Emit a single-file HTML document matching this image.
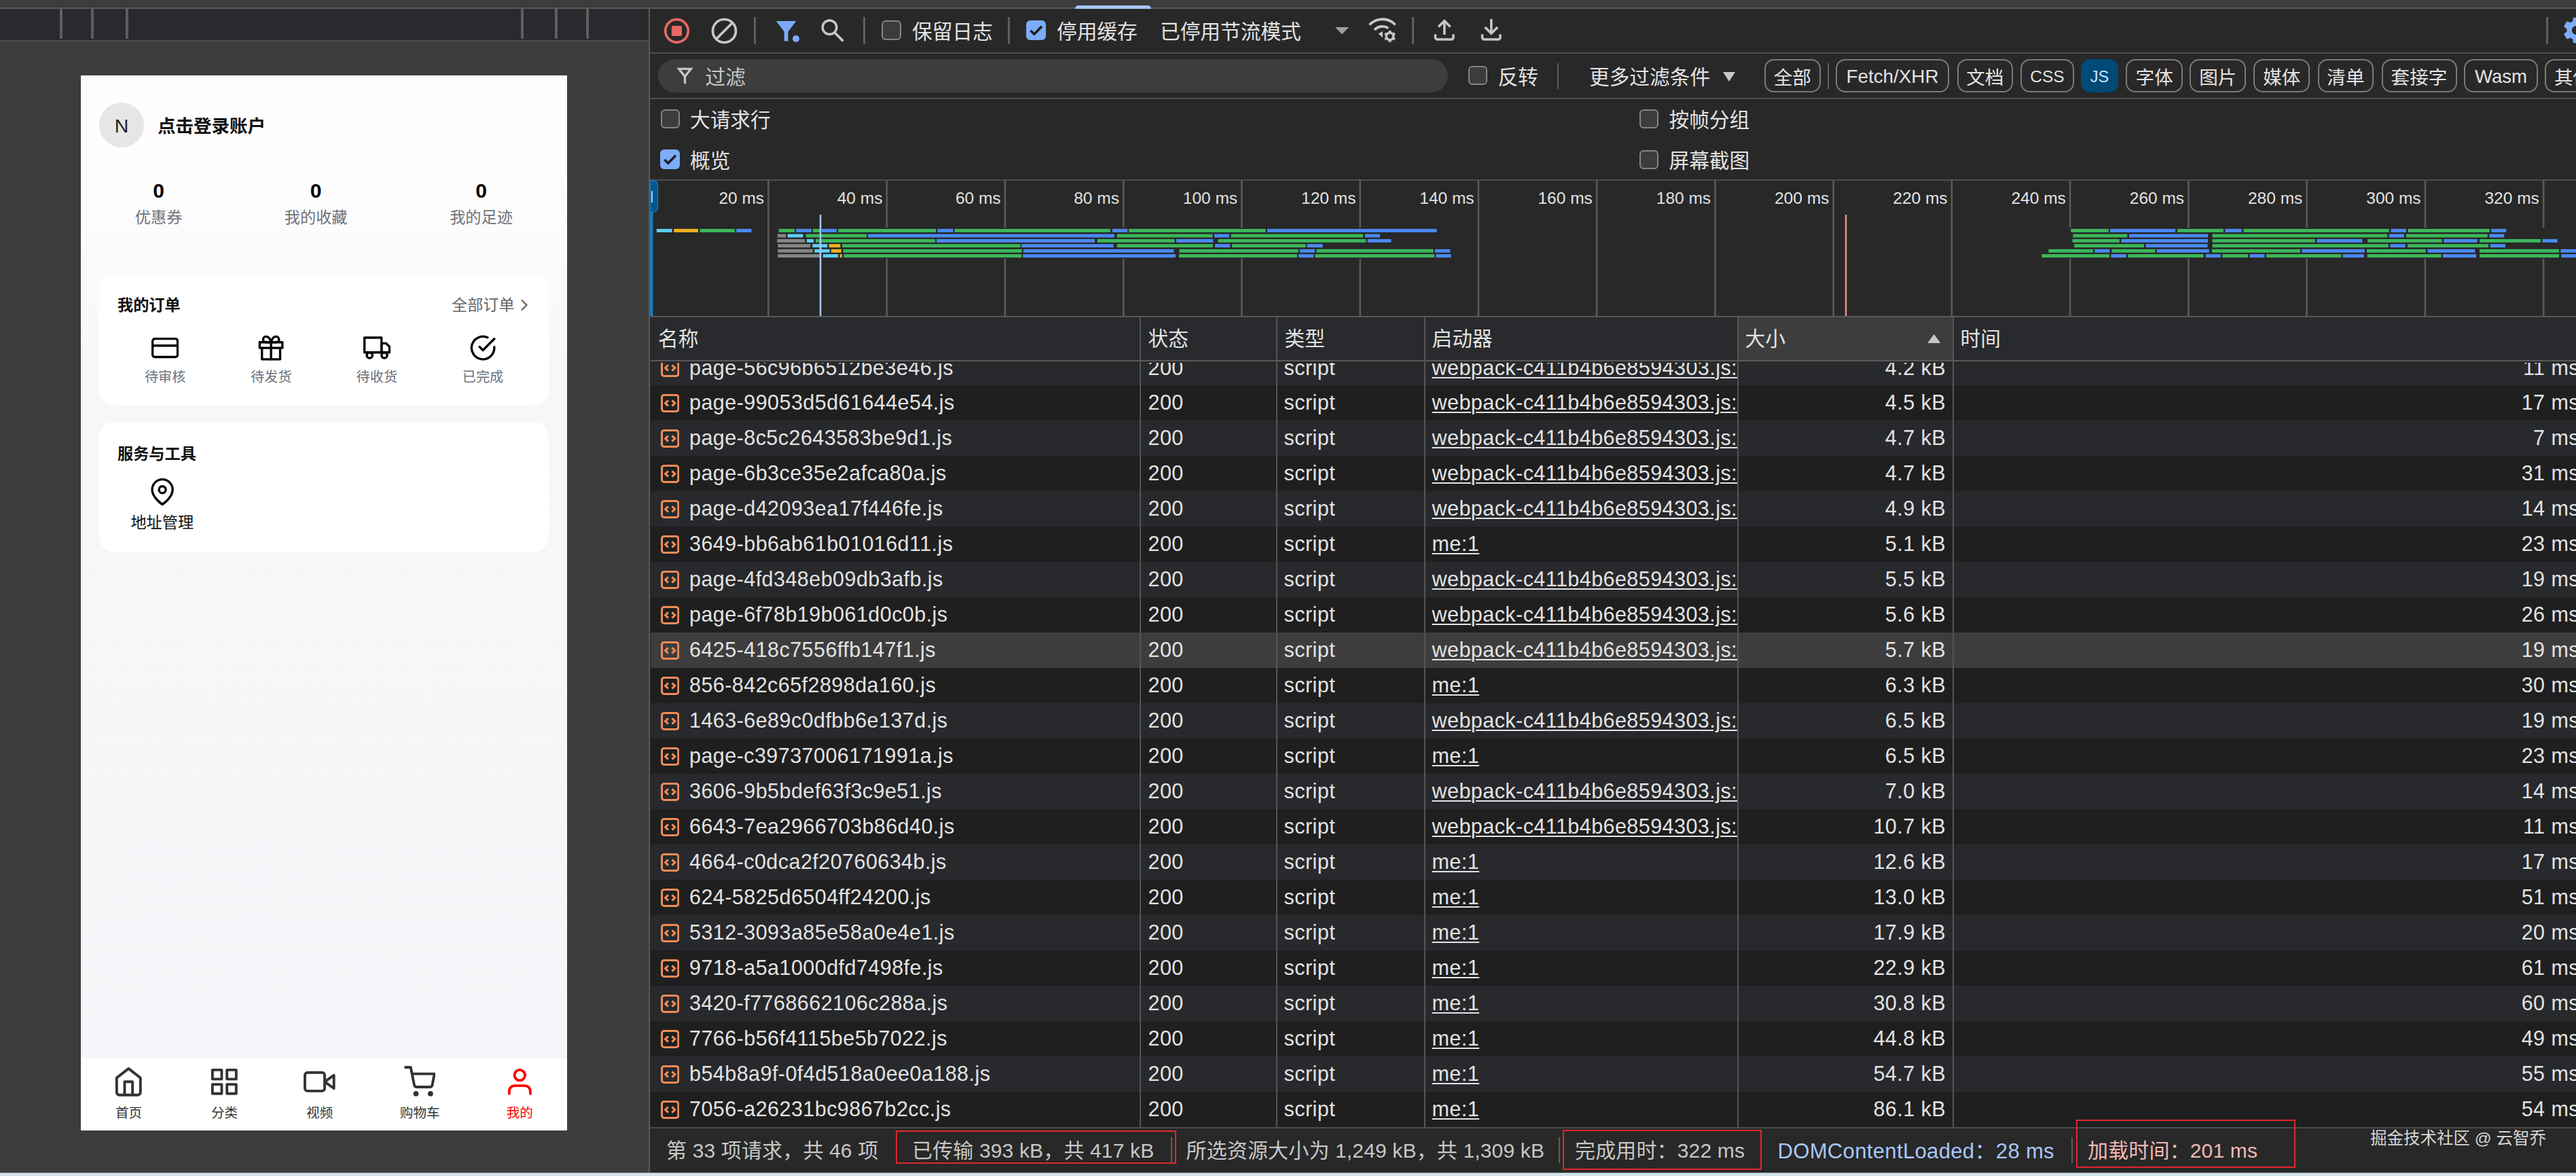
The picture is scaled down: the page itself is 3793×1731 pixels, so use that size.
<!DOCTYPE html><html lang="zh-CN"><head><meta charset="utf-8"><title>Network</title><style>
*{box-sizing:border-box;margin:0;padding:0}
html,body{width:3793px;height:1731px;overflow:hidden;background:#3c3c3c}
body{position:relative;font-family:"Liberation Sans","Noto Sans CJK SC",sans-serif;color:#e3e3e3}
.a{position:absolute}
.t{position:absolute;white-space:nowrap;line-height:1}
.dt{font-size:29.7px;color:#e3e3e3;margin-top:1.5px}
.la{font-size:30.5px;letter-spacing:.45px}
.ph{font-family:"Liberation Sans","Noto Sans CJK SC",sans-serif}
.vd{position:absolute;width:2.6px;background:#5e5e5e}
.cb{position:absolute;width:29px;height:29px;border:2.5px solid #858585;border-radius:6px;background:#3c3c3c}
.cbc{position:absolute;width:29px;height:29px;border-radius:6px;background:#7cacf8}
.pill{position:absolute;top:87px;height:49px;border:2px solid #7a7a7a;border-radius:14px;font-size:27.6px;line-height:51.5px;text-align:center;color:#e3e3e3;white-space:nowrap}
.row{position:absolute;left:958px;width:2840px;height:52px}
.row .t{top:10px}
.ic{position:absolute;left:14.800px;top:12.400px;width:27.400px;height:27px}
u{text-decoration-thickness:2px;text-underline-offset:3px}
</style></head><body><div class="a" style="left:0;top:0;width:955px;height:1726px;background:#3c3c3c"></div><div class="a" style="left:0;top:11px;width:955px;height:50px;background:#292a2d;border-top:2px solid #595959;border-bottom:2px solid #4d4d4d"></div><div class="a" style="left:88.4px;top:12px;width:3.700px;height:45px;background:#5e5e5e"></div><div class="a" style="left:134.3px;top:12px;width:3.700px;height:45px;background:#5e5e5e"></div><div class="a" style="left:185px;top:12px;width:3.700px;height:45px;background:#5e5e5e"></div><div class="a" style="left:767.3px;top:12px;width:3.700px;height:45px;background:#5e5e5e"></div><div class="a" style="left:817px;top:12px;width:3.700px;height:45px;background:#5e5e5e"></div><div class="a" style="left:863.3px;top:12px;width:3.700px;height:45px;background:#5e5e5e"></div><div class="a ph" id="phone" style="left:119px;top:111px;width:716px;height:1553px;background:linear-gradient(#fffdfd 0,#fffdfd 150px,#f7f7f9 420px,#f5f6f9 100%);overflow:hidden;color:#111"><div class="a" style="left:27px;top:40px;width:66px;height:66px;border-radius:50%;background:#e6e6e7"></div><div class="t" style="left:27px;width:66px;text-align:center;top:59.5px;font-size:28.5px;color:#222">N</div><div class="t" style="left:113px;top:61.5px;font-size:26.5px;font-weight:700;color:#111">点击登录账户</div><div class="t" style="left:54.599999999999994px;width:120px;text-align:center;top:155px;font-size:30px;font-weight:700;color:#000">0</div><div class="t" style="left:34.599999999999994px;width:160px;text-align:center;top:197.800px;font-size:23.2px;color:#6f7277">优惠券</div><div class="t" style="left:286.2px;width:120px;text-align:center;top:155px;font-size:30px;font-weight:700;color:#000">0</div><div class="t" style="left:266.2px;width:160px;text-align:center;top:197.800px;font-size:23.2px;color:#6f7277">我的收藏</div><div class="t" style="left:529.5px;width:120px;text-align:center;top:155px;font-size:30px;font-weight:700;color:#000">0</div><div class="t" style="left:509.5px;width:160px;text-align:center;top:197.800px;font-size:23.2px;color:#6f7277">我的足迹</div><div class="a" style="left:27.4px;top:293.5px;width:662px;height:191.5px;border-radius:22px;background:#fff"></div><div class="t" style="left:54px;top:326.500px;font-size:23.2px;font-weight:700;color:#111">我的订单</div><div class="t" style="left:546px;top:326.500px;font-size:23.2px;color:#666">全部订单</div><svg class="a" style="left:638.5px;top:323.5px" width="28" height="28" viewBox="0 0 24 24" fill="none" stroke="#666" stroke-width="2" stroke-linecap="round" stroke-linejoin="round"><polyline points="9 18 15 12 9 6"/></svg><svg class="a" style="left:104.1px;top:381px;color:#000" width="40.2" height="40.2" viewBox="0 0 24 24" fill="none" stroke="currentColor" stroke-width="2" stroke-linecap="round" stroke-linejoin="round"><rect x="1" y="4" width="22" height="16" rx="2" ry="2"/><line x1="1" y1="10" x2="23" y2="10"/></svg><div class="t" style="left:64.2px;width:120px;text-align:center;top:434px;font-size:20.2px;color:#6b7280">待审核</div><svg class="a" style="left:260.2px;top:381px;color:#000" width="40.2" height="40.2" viewBox="0 0 24 24" fill="none" stroke="currentColor" stroke-width="2" stroke-linecap="round" stroke-linejoin="round"><polyline points="20 12 20 22 4 22 4 12"/><rect x="2" y="7" width="20" height="5"/><line x1="12" y1="22" x2="12" y2="7"/><path d="M12 7H7.5a2.5 2.5 0 0 1 0-5C11 2 12 7 12 7z"/><path d="M12 7h4.500a2.5 2.5 0 0 0 0-5C13 2 12 7 12 7z"/></svg><div class="t" style="left:220.3px;width:120px;text-align:center;top:434px;font-size:20.2px;color:#6b7280">待发货</div><svg class="a" style="left:415.79999999999995px;top:381px;color:#000" width="40.2" height="40.2" viewBox="0 0 24 24" fill="none" stroke="currentColor" stroke-width="2" stroke-linecap="round" stroke-linejoin="round"><rect x="1" y="3" width="15" height="13"/><polygon points="16 8 20 8 23 11 23 16 16 16 16 8"/><circle cx="5.5" cy="18.5" r="2.5"/><circle cx="18.500" cy="18.5" r="2.5"/></svg><div class="t" style="left:375.9px;width:120px;text-align:center;top:434px;font-size:20.2px;color:#6b7280">待收货</div><svg class="a" style="left:571.9px;top:381px;color:#000" width="40.2" height="40.2" viewBox="0 0 24 24" fill="none" stroke="currentColor" stroke-width="2" stroke-linecap="round" stroke-linejoin="round"><path d="M22 11.080V12a10 10 0 1 1-5.930-9.140"/><polyline points="22 4 12 14.010 9 11.010"/></svg><div class="t" style="left:532px;width:120px;text-align:center;top:434px;font-size:20.2px;color:#6b7280">已完成</div><div class="a" style="left:27.4px;top:510px;width:662px;height:190.5px;border-radius:22px;background:#fff"></div><div class="t" style="left:54px;top:546px;font-size:23.2px;font-weight:700;color:#111">服务与工具</div><svg class="a" style="left:99.69999999999999px;top:593px;color:#000" width="40.2" height="40.2" viewBox="0 0 24 24" fill="none" stroke="currentColor" stroke-width="2" stroke-linecap="round" stroke-linejoin="round"><path d="M21 10c0 7-9 13-9 13s-9-6-9-13a9 9 0 0 1 18 0z"/><circle cx="12" cy="10" r="3"/></svg><div class="t" style="left:59.800px;width:120px;text-align:center;top:646.800px;font-size:23.2px;color:#111">地址管理</div><div class="a" style="left:0;top:1446.5px;width:716px;height:107px;background:#fff"></div><svg class="a" style="left:47.3px;top:1458px;color:#333" width="46.6" height="46.6" viewBox="0 0 24 24" fill="none" stroke="currentColor" stroke-width="2" stroke-linecap="round" stroke-linejoin="round"><path d="M3 9l9-7 9 7v11a2 2 0 0 1-2 2H5a2 2 0 0 1-2-2z"/><polyline points="9 22 9 12 15 12 15 22"/></svg><div class="t" style="left:10.599999999999994px;width:120px;text-align:center;top:1517.800px;font-size:19.600px;color:#333">首页</div><svg class="a" style="left:188.2px;top:1458px;color:#333" width="46.6" height="46.6" viewBox="0 0 24 24" fill="none" stroke="currentColor" stroke-width="2" stroke-linecap="round" stroke-linejoin="round"><rect x="3" y="3" width="7" height="7"/><rect x="14" y="3" width="7" height="7"/><rect x="14" y="14" width="7" height="7"/><rect x="3" y="14" width="7" height="7"/></svg><div class="t" style="left:151.5px;width:120px;text-align:center;top:1517.800px;font-size:19.600px;color:#333">分类</div><svg class="a" style="left:328.4px;top:1458px;color:#333" width="46.6" height="46.6" viewBox="0 0 24 24" fill="none" stroke="currentColor" stroke-width="2" stroke-linecap="round" stroke-linejoin="round"><polygon points="23 7 16 12 23 17 23 7"/><rect x="1" y="5" width="15" height="14" rx="2" ry="2"/></svg><div class="t" style="left:291.7px;width:120px;text-align:center;top:1517.800px;font-size:19.600px;color:#333">视频</div><svg class="a" style="left:475.9px;top:1458px;color:#333" width="46.6" height="46.6" viewBox="0 0 24 24" fill="none" stroke="currentColor" stroke-width="2" stroke-linecap="round" stroke-linejoin="round"><circle cx="9" cy="21" r="1"/><circle cx="20" cy="21" r="1"/><path d="M1 1h4l2.680 13.390a2 2 0 0 0 2 1.610h9.720a2 2 0 0 0 2-1.610L23 6H6"/></svg><div class="t" style="left:439.2px;width:120px;text-align:center;top:1517.800px;font-size:19.600px;color:#333">购物车</div><svg class="a" style="left:623.0px;top:1458px;color:#fa0000" width="46.6" height="46.6" viewBox="0 0 24 24" fill="none" stroke="currentColor" stroke-width="2" stroke-linecap="round" stroke-linejoin="round"><path d="M20 21v-2a4 4 0 0 0-4-4H8a4 4 0 0 0-4 4v2"/><circle cx="12" cy="7" r="4"/></svg><div class="t" style="left:586.3px;width:120px;text-align:center;top:1517.800px;font-size:19.600px;color:#fa0000">我的</div></div><div class="a" id="dev" style="left:955px;top:0;width:2838px;height:1726px;background:#282828;overflow:hidden"></div><div class="a" style="left:955px;top:0;width:2838px;height:11px;background:#3c3c3c"></div><div class="a" style="left:955px;top:11px;width:2838px;height:2px;background:#595959"></div><div class="a" style="left:954.6px;top:12px;width:2.6px;height:1714px;background:#585858"></div><div class="a" style="left:1583px;top:7.500px;width:112px;height:5px;border-radius:5px 5px 0 0;background:#a8c7fa"></div><div class="a" style="left:957px;top:77px;width:2836px;height:2.4px;background:#4d4d4d"></div><div class="a" style="left:957px;top:144px;width:2836px;height:2.4px;background:#4d4d4d"></div><div class="a" style="left:957px;top:264px;width:2836px;height:2px;background:#4d4d4d"></div><svg class="a" style="left:976px;top:25px" width="41" height="41" viewBox="0 0 41 41"><circle cx="20.5" cy="20.5" r="16.800" fill="none" stroke="#e46962" stroke-width="3.7"/><rect x="12.900" y="12.900" width="15.200" height="15.200" rx="2" fill="#e46962"/></svg><svg class="a" style="left:1045.500px;top:25px" width="41" height="41" viewBox="0 0 41 41"><circle cx="20.5" cy="20.5" r="17" fill="none" stroke="#c7c7c7" stroke-width="3.7"/><line x1="8.500" y1="32.500" x2="32.500" y2="8.500" stroke="#c7c7c7" stroke-width="3.7"/></svg><div class="vd" style="left:1110.200px;top:25px;height:39.500px"></div><svg class="a" style="left:1140px;top:28px" width="40" height="36" viewBox="0 0 40 36"><path d="M2.800 3h29.500L20.500 18.500V32.500h-5.800V18.500z" fill="#7cacf8"/><circle cx="32" cy="29" r="5" fill="#7cacf8"/></svg><svg class="a" style="left:1206px;top:25px" width="40" height="40" viewBox="0 0 40 40"><circle cx="15.500" cy="15.300" r="10.300" fill="none" stroke="#c7c7c7" stroke-width="3.500"/><line x1="22.800" y1="22.800" x2="35.500" y2="35.500" stroke="#c7c7c7" stroke-width="3.700"/></svg><div class="vd" style="left:1271.200px;top:25px;height:39.500px"></div><div class="cb" style="left:1298.400px;top:30.300px"></div><div class="t dt" style="left:1343px;top:30px">保留日志</div><div class="vd" style="left:1484.400px;top:25px;height:39.500px"></div><div class="cbc" style="left:1511.400px;top:30.300px"><svg width="29" height="29" viewBox="0 0 29 29" style="position:absolute;left:0;top:0"><path d="M6.500 15l5.300 5.300L23 8.800" fill="none" stroke="#1f1f1f" stroke-width="3.600"/></svg></div><div class="t dt" style="left:1556px;top:30px">停用缓存</div><div class="t dt" style="left:1708px;top:30px">已停用节流模式</div><svg class="a" style="left:1965.500px;top:40px" width="20" height="11" viewBox="0 0 20 11"><path d="M0 0h20L10 10.500z" fill="#9e9e9e"/></svg><svg class="a" style="left:2013px;top:25px" width="46" height="40" viewBox="0 0 46 40"><g fill="none" stroke="#c7c7c7" stroke-width="3.800"><path d="M3.500 11.500a26 26 0 0 1 38 0"/><path d="M10.800 19a16 16 0 0 1 20.500-2.500"/></g><path d="M16.500 24.500l6.500-3.500v9.500z" fill="#c7c7c7"/><g transform="translate(33.500,28.500)"><circle r="5.200" fill="none" stroke="#c7c7c7" stroke-width="3.600"/><g stroke="#c7c7c7" stroke-width="3.600"><line x1="0" y1="-8.500" x2="0" y2="-5"/><line x1="0" y1="8.500" x2="0" y2="5"/><line x1="-7.400" y1="-4.250" x2="-4.300" y2="-2.500"/><line x1="7.400" y1="4.250" x2="4.300" y2="2.500"/><line x1="-7.400" y1="4.250" x2="-4.300" y2="2.500"/><line x1="7.400" y1="-4.250" x2="4.300" y2="-2.500"/></g></g></svg><div class="vd" style="left:2079px;top:25px;height:39.500px"></div><svg class="a" style="left:2110px;top:26px" width="34" height="36" viewBox="0 0 34 36" fill="none" stroke="#c7c7c7" stroke-width="3.600"><path d="M3.500 24.500v4.500a3 3 0 0 0 3 3h20.500a3 3 0 0 0 3-3v-4.500"/><path d="M16.800 25V5.500"/><path d="M8 13.500l8.800-8.800 8.800 8.800"/></svg><svg class="a" style="left:2179px;top:26px" width="34" height="36" viewBox="0 0 34 36" fill="none" stroke="#c7c7c7" stroke-width="3.600"><path d="M3.500 24.500v4.500a3 3 0 0 0 3 3h20.500a3 3 0 0 0 3-3v-4.500"/><path d="M16.800 2v20.500"/><path d="M7.500 14l9.300 9.300L26.100 14"/></svg><div class="vd" style="left:3749.200px;top:25px;height:40px"></div><svg class="a" style="left:3771px;top:22.400px" width="45" height="45" viewBox="0 0 24 24"><path fill="#7cacf8" d="M19.430 12.980c.040-.320.070-.640.070-.980s-.030-.660-.070-.980l2.110-1.650c.190-.150.240-.420.120-.640l-2-3.460c-.120-.220-.390-.300-.610-.220l-2.490 1c-.520-.400-1.080-.730-1.690-.980l-.380-2.650C14.460 2.180 14.250 2 14 2h-4c-.250 0-.460.180-.490.420l-.380 2.650c-.610.250-1.170.590-1.690.980l-2.490-1c-.230-.090-.490 0-.610.220l-2 3.460c-.130.220-.070.490.120.640l2.110 1.650c-.040.320-.070.650-.070.980s.030.660.070.980l-2.110 1.650c-.190.150-.240.420-.120.640l2 3.460c.120.220.390.300.610.220l2.490-1c.520.400 1.080.730 1.690.980l.380 2.650c.030.240.240.420.490.420h4c.250 0 .460-.180.490-.420l.380-2.650c.610-.250 1.170-.590 1.690-.980l2.490 1c.230.090.490 0 .610-.220l2-3.460c.120-.220.070-.490-.120-.640l-2.110-1.650zM12 15.500c-1.930 0-3.500-1.570-3.500-3.500s1.570-3.500 3.500-3.500 3.500 1.570 3.500 3.500-1.570 3.500-3.500 3.500z"/></svg><div class="a" style="left:969px;top:87px;width:1163px;height:48.600px;border-radius:25px;background:#3d3d3d"></div><svg class="a" style="left:995px;top:98px" width="27" height="27" viewBox="0 0 27 27" fill="none" stroke="#c7c7c7" stroke-width="3.300"><path d="M4.700 3.400h17.600L13.500 14.600z" stroke-linejoin="miter"/><path d="M13.500 13.500v11.800"/></svg><div class="t dt" style="left:1038.500px;top:97px;color:#c7c7c7">过滤</div><div class="cb" style="left:2162px;top:97px;width:28px;height:28px"></div><div class="t dt" style="left:2205.500px;top:97px">反转</div><div class="vd" style="left:2293px;top:93px;height:38px;width:2px"></div><div class="t dt" style="left:2340px;top:97px">更多过滤条件</div><svg class="a" style="left:2536.500px;top:106px" width="18" height="15" viewBox="0 0 18 15"><path d="M0 0h18L9 14z" fill="#c7c7c7"/></svg><div class="pill" style="left:2597.7px;width:83.1px;">全部</div><div class="pill" style="left:2703px;width:167.0px;font-size:27.8px;line-height:48px;">Fetch/XHR</div><div class="pill" style="left:2881.5px;width:82.5px;">文档</div><div class="pill" style="left:2975.4px;width:78.2px;font-size:24.5px;line-height:48px;">CSS</div><div class="pill" style="left:3064px;width:55.0px;background:#004a77;border-color:#004a77;color:#c2e7ff;font-size:23.5px;line-height:48px;">JS</div><div class="pill" style="left:3130.4px;width:83.5px;">字体</div><div class="pill" style="left:3224.3px;width:83.1px;">图片</div><div class="pill" style="left:3318.2px;width:83.2px;">媒体</div><div class="pill" style="left:3412.5px;width:82.8px;">清单</div><div class="pill" style="left:3506.5px;width:111.0px;">套接字</div><div class="pill" style="left:3628px;width:109.0px;font-size:27.6px;line-height:48px;">Wasm</div><div class="pill" style="left:3747px;width:83.0px;">其他</div><div class="vd" style="left:2691px;top:93px;height:38px;width:2px"></div><div class="cb" style="left:972.500px;top:160.500px;width:28px;height:28px"></div><div class="t dt" style="left:1016px;top:160px">大请求行</div><div class="cbc" style="left:972px;top:220px"><svg width="29" height="29" viewBox="0 0 29 29" style="position:absolute;left:0;top:0"><path d="M6.500 15l5.300 5.300L23 8.800" fill="none" stroke="#1f1f1f" stroke-width="3.600"/></svg></div><div class="t dt" style="left:1016px;top:220px">概览</div><div class="cb" style="left:2414px;top:160.500px;width:28px;height:28px"></div><div class="t dt" style="left:2457.500px;top:160px">按帧分组</div><div class="cb" style="left:2414px;top:220.500px;width:28px;height:28px"></div><div class="t dt" style="left:2457.500px;top:220px">屏幕截图</div><svg class="a" style="left:957px;top:265px" width="2836" height="200" viewBox="957 265 2836 200"><rect x="1130.1" y="265" width="2.6" height="200" fill="#5a5a5a"/><text x="1125.1" y="300" text-anchor="end" font-size="24.500" fill="#e3e3e3" font-family="Liberation Sans, sans-serif">20 ms</text><rect x="1304.4" y="265" width="2.6" height="200" fill="#5a5a5a"/><text x="1299.4" y="300" text-anchor="end" font-size="24.500" fill="#e3e3e3" font-family="Liberation Sans, sans-serif">40 ms</text><rect x="1478.6" y="265" width="2.6" height="200" fill="#5a5a5a"/><text x="1473.6" y="300" text-anchor="end" font-size="24.500" fill="#e3e3e3" font-family="Liberation Sans, sans-serif">60 ms</text><rect x="1652.9" y="265" width="2.6" height="200" fill="#5a5a5a"/><text x="1647.9" y="300" text-anchor="end" font-size="24.500" fill="#e3e3e3" font-family="Liberation Sans, sans-serif">80 ms</text><rect x="1827.1" y="265" width="2.6" height="200" fill="#5a5a5a"/><text x="1822.1" y="300" text-anchor="end" font-size="24.500" fill="#e3e3e3" font-family="Liberation Sans, sans-serif">100 ms</text><rect x="2001.4" y="265" width="2.6" height="200" fill="#5a5a5a"/><text x="1996.4" y="300" text-anchor="end" font-size="24.500" fill="#e3e3e3" font-family="Liberation Sans, sans-serif">120 ms</text><rect x="2175.6" y="265" width="2.6" height="200" fill="#5a5a5a"/><text x="2170.6" y="300" text-anchor="end" font-size="24.500" fill="#e3e3e3" font-family="Liberation Sans, sans-serif">140 ms</text><rect x="2349.8" y="265" width="2.6" height="200" fill="#5a5a5a"/><text x="2344.8" y="300" text-anchor="end" font-size="24.500" fill="#e3e3e3" font-family="Liberation Sans, sans-serif">160 ms</text><rect x="2524.1" y="265" width="2.6" height="200" fill="#5a5a5a"/><text x="2519.1" y="300" text-anchor="end" font-size="24.500" fill="#e3e3e3" font-family="Liberation Sans, sans-serif">180 ms</text><rect x="2698.3" y="265" width="2.6" height="200" fill="#5a5a5a"/><text x="2693.3" y="300" text-anchor="end" font-size="24.500" fill="#e3e3e3" font-family="Liberation Sans, sans-serif">200 ms</text><rect x="2872.6" y="265" width="2.6" height="200" fill="#5a5a5a"/><text x="2867.6" y="300" text-anchor="end" font-size="24.500" fill="#e3e3e3" font-family="Liberation Sans, sans-serif">220 ms</text><rect x="3046.8" y="265" width="2.6" height="200" fill="#5a5a5a"/><text x="3041.8" y="300" text-anchor="end" font-size="24.500" fill="#e3e3e3" font-family="Liberation Sans, sans-serif">240 ms</text><rect x="3221.1" y="265" width="2.6" height="200" fill="#5a5a5a"/><text x="3216.1" y="300" text-anchor="end" font-size="24.500" fill="#e3e3e3" font-family="Liberation Sans, sans-serif">260 ms</text><rect x="3395.3" y="265" width="2.6" height="200" fill="#5a5a5a"/><text x="3390.3" y="300" text-anchor="end" font-size="24.500" fill="#e3e3e3" font-family="Liberation Sans, sans-serif">280 ms</text><rect x="3569.6" y="265" width="2.6" height="200" fill="#5a5a5a"/><text x="3564.6" y="300" text-anchor="end" font-size="24.500" fill="#e3e3e3" font-family="Liberation Sans, sans-serif">300 ms</text><rect x="3743.8" y="265" width="2.6" height="200" fill="#5a5a5a"/><text x="3738.8" y="300" text-anchor="end" font-size="24.500" fill="#e3e3e3" font-family="Liberation Sans, sans-serif">320 ms</text><rect x="1143" y="335" width="995" height="45.500" fill="#282828"/><rect x="3005" y="335" width="788" height="45.500" fill="#282828"/><rect x="965.6" y="335.7" width="25.2" height="7.400" fill="#282828"/><rect x="991.0" y="335.7" width="38.2" height="7.400" fill="#282828"/><rect x="1029.4" y="335.7" width="53.8" height="7.400" fill="#282828"/><rect x="1083.0" y="335.7" width="24.8" height="7.400" fill="#282828"/><rect x="1145.4" y="335.7" width="26.0" height="7.400" fill="#282828"/><rect x="1171.1" y="335.7" width="25.1" height="7.400" fill="#282828"/><rect x="1195.7" y="335.7" width="12.6" height="7.400" fill="#282828"/><rect x="1208.7" y="335.7" width="24.4" height="7.400" fill="#282828"/><rect x="1233.0" y="335.7" width="146.4" height="7.400" fill="#282828"/><rect x="1379.2" y="335.7" width="25.4" height="7.400" fill="#282828"/><rect x="1404.4" y="335.7" width="231.8" height="7.400" fill="#282828"/><rect x="1636.6" y="335.7" width="24.9" height="7.400" fill="#282828"/><rect x="1661.0" y="335.7" width="203.8" height="7.400" fill="#282828"/><rect x="1864.8" y="335.7" width="251.9" height="7.400" fill="#282828"/><rect x="3048.0" y="335.7" width="58.0" height="7.400" fill="#282828"/><rect x="3105.9" y="335.7" width="98.3" height="7.400" fill="#282828"/><rect x="3204.7" y="335.7" width="70.5" height="7.400" fill="#282828"/><rect x="3275.1" y="335.7" width="26.9" height="7.400" fill="#282828"/><rect x="3302.2" y="335.7" width="216.8" height="7.400" fill="#282828"/><rect x="3519.2" y="335.7" width="25.0" height="7.400" fill="#282828"/><rect x="3544.4" y="335.7" width="122.5" height="7.400" fill="#282828"/><rect x="3667.1" y="335.7" width="24.3" height="7.400" fill="#282828"/><rect x="1143.5" y="343.3" width="14.9" height="7.400" fill="#282828"/><rect x="1158.4" y="343.3" width="25.2" height="7.400" fill="#282828"/><rect x="1185.4" y="343.3" width="91.9" height="7.400" fill="#282828"/><rect x="1276.8" y="343.3" width="365.4" height="7.400" fill="#282828"/><rect x="1643.4" y="343.3" width="143.1" height="7.400" fill="#282828"/><rect x="1786.8" y="343.3" width="24.4" height="7.400" fill="#282828"/><rect x="1811.4" y="343.3" width="196.8" height="7.400" fill="#282828"/><rect x="2008.6" y="343.3" width="24.4" height="7.400" fill="#282828"/><rect x="3051.2" y="343.3" width="82.3" height="7.400" fill="#282828"/><rect x="3133.7" y="343.3" width="118.6" height="7.400" fill="#282828"/><rect x="3256.4" y="343.3" width="260.0" height="7.400" fill="#282828"/><rect x="3516.6" y="343.3" width="24.6" height="7.400" fill="#282828"/><rect x="3541.8" y="343.3" width="122.1" height="7.400" fill="#282828"/><rect x="3664.2" y="343.3" width="24.3" height="7.400" fill="#282828"/><rect x="1143.0" y="350.7" width="43.4" height="7.400" fill="#282828"/><rect x="1186.8" y="350.7" width="12.6" height="7.400" fill="#282828"/><rect x="1199.8" y="350.7" width="178.5" height="7.400" fill="#282828"/><rect x="1377.8" y="350.7" width="235.4" height="7.400" fill="#282828"/><rect x="1614.6" y="350.7" width="116.1" height="7.400" fill="#282828"/><rect x="1730.7" y="350.7" width="56.9" height="7.400" fill="#282828"/><rect x="1792.3" y="350.7" width="220.3" height="7.400" fill="#282828"/><rect x="2012.4" y="350.7" width="37.2" height="7.400" fill="#282828"/><rect x="3050.2" y="350.7" width="71.8" height="7.400" fill="#282828"/><rect x="3122.2" y="350.7" width="130.1" height="7.400" fill="#282828"/><rect x="3256.4" y="350.7" width="153.6" height="7.400" fill="#282828"/><rect x="3410.2" y="350.7" width="69.5" height="7.400" fill="#282828"/><rect x="3484.8" y="350.7" width="112.1" height="7.400" fill="#282828"/><rect x="3597.1" y="350.7" width="51.8" height="7.400" fill="#282828"/><rect x="3649.8" y="350.7" width="92.4" height="7.400" fill="#282828"/><rect x="3742.4" y="350.7" width="24.6" height="7.400" fill="#282828"/><rect x="1144.1" y="358.0" width="50.3" height="7.400" fill="#282828"/><rect x="1195.1" y="358.0" width="24.4" height="7.400" fill="#282828"/><rect x="1219.5" y="358.0" width="19.0" height="7.400" fill="#282828"/><rect x="1238.9" y="358.0" width="264.8" height="7.400" fill="#282828"/><rect x="1502.8" y="358.0" width="137.9" height="7.400" fill="#282828"/><rect x="1643.4" y="358.0" width="143.8" height="7.400" fill="#282828"/><rect x="1787.8" y="358.0" width="24.6" height="7.400" fill="#282828"/><rect x="1812.8" y="358.0" width="111.0" height="7.400" fill="#282828"/><rect x="1923.5" y="358.0" width="25.3" height="7.400" fill="#282828"/><rect x="3052.9" y="358.0" width="105.1" height="7.400" fill="#282828"/><rect x="3158.2" y="358.0" width="93.4" height="7.400" fill="#282828"/><rect x="3256.4" y="358.0" width="261.6" height="7.400" fill="#282828"/><rect x="3518.2" y="358.0" width="24.7" height="7.400" fill="#282828"/><rect x="3543.7" y="358.0" width="121.5" height="7.400" fill="#282828"/><rect x="3665.5" y="358.0" width="24.6" height="7.400" fill="#282828"/><rect x="1144.1" y="365.6" width="54.0" height="7.400" fill="#282828"/><rect x="1198.1" y="365.6" width="24.8" height="7.400" fill="#282828"/><rect x="1222.7" y="365.6" width="17.3" height="7.400" fill="#282828"/><rect x="1240.4" y="365.6" width="265.5" height="7.400" fill="#282828"/><rect x="1505.6" y="365.6" width="223.9" height="7.400" fill="#282828"/><rect x="1735.2" y="365.6" width="177.7" height="7.400" fill="#282828"/><rect x="1912.7" y="365.6" width="24.6" height="7.400" fill="#282828"/><rect x="1937.1" y="365.6" width="174.7" height="7.400" fill="#282828"/><rect x="2111.6" y="365.6" width="24.9" height="7.400" fill="#282828"/><rect x="3015.2" y="365.6" width="67.9" height="7.400" fill="#282828"/><rect x="3083.0" y="365.6" width="24.6" height="7.400" fill="#282828"/><rect x="3108.2" y="365.6" width="66.5" height="7.400" fill="#282828"/><rect x="3174.6" y="365.6" width="79.3" height="7.400" fill="#282828"/><rect x="3255.8" y="365.6" width="132.3" height="7.400" fill="#282828"/><rect x="3388.3" y="365.6" width="94.7" height="7.400" fill="#282828"/><rect x="3483.8" y="365.6" width="89.2" height="7.400" fill="#282828"/><rect x="3573.2" y="365.6" width="72.4" height="7.400" fill="#282828"/><rect x="3649.8" y="365.6" width="119.5" height="7.400" fill="#282828"/><rect x="3769.2" y="365.6" width="25.0" height="7.400" fill="#282828"/><rect x="1144.1" y="372.9" width="64.1" height="7.400" fill="#282828"/><rect x="1210.6" y="372.9" width="24.8" height="7.400" fill="#282828"/><rect x="1235.4" y="372.9" width="5.6" height="7.400" fill="#282828"/><rect x="1241.3" y="372.9" width="264.2" height="7.400" fill="#282828"/><rect x="1505.0" y="372.9" width="227.2" height="7.400" fill="#282828"/><rect x="1734.7" y="372.9" width="176.3" height="7.400" fill="#282828"/><rect x="1910.8" y="372.9" width="24.6" height="7.400" fill="#282828"/><rect x="1935.2" y="372.9" width="178.2" height="7.400" fill="#282828"/><rect x="2113.2" y="372.9" width="24.7" height="7.400" fill="#282828"/><rect x="3005.1" y="372.9" width="102.2" height="7.400" fill="#282828"/><rect x="3107.2" y="372.9" width="24.6" height="7.400" fill="#282828"/><rect x="3132.1" y="372.9" width="113.6" height="7.400" fill="#282828"/><rect x="3246.6" y="372.9" width="24.3" height="7.400" fill="#282828"/><rect x="3271.1" y="372.9" width="40.1" height="7.400" fill="#282828"/><rect x="3311.1" y="372.9" width="24.6" height="7.400" fill="#282828"/><rect x="3335.9" y="372.9" width="112.7" height="7.400" fill="#282828"/><rect x="3448.5" y="372.9" width="33.5" height="7.400" fill="#282828"/><rect x="3484.5" y="372.9" width="111.4" height="7.400" fill="#282828"/><rect x="3595.8" y="372.9" width="51.4" height="7.400" fill="#282828"/><rect x="3649.8" y="372.9" width="119.5" height="7.400" fill="#282828"/><rect x="3770.2" y="372.9" width="24.0" height="7.400" fill="#282828"/><rect x="966.8" y="336.9" width="22.8" height="5" fill="#5fcff5"/><rect x="992.2" y="336.9" width="35.8" height="5" fill="#f2b01e"/><rect x="1030.6" y="336.9" width="51.4" height="5" fill="#3bb75a"/><rect x="1084.2" y="336.9" width="22.4" height="5" fill="#4a8af4"/><rect x="1146.6" y="336.9" width="23.6" height="5" fill="#3bb75a"/><rect x="1172.3" y="336.9" width="22.7" height="5" fill="#4a8af4"/><rect x="1196.9" y="336.9" width="10.2" height="5" fill="#3bb75a"/><rect x="1209.9" y="336.9" width="22.0" height="5" fill="#4a8af4"/><rect x="1234.2" y="336.9" width="144.0" height="5" fill="#3bb75a"/><rect x="1380.4" y="336.9" width="23.0" height="5" fill="#4a8af4"/><rect x="1405.6" y="336.9" width="229.4" height="5" fill="#3bb75a"/><rect x="1637.8" y="336.9" width="22.5" height="5" fill="#4a8af4"/><rect x="1662.2" y="336.9" width="201.4" height="5" fill="#3bb75a"/><rect x="1866.0" y="336.9" width="249.5" height="5" fill="#4a8af4"/><rect x="3049.2" y="336.9" width="55.6" height="5" fill="#3bb75a"/><rect x="3107.1" y="336.9" width="95.9" height="5" fill="#4a8af4"/><rect x="3205.9" y="336.9" width="68.1" height="5" fill="#3bb75a"/><rect x="3276.3" y="336.9" width="24.5" height="5" fill="#4a8af4"/><rect x="3303.4" y="336.9" width="214.4" height="5" fill="#3bb75a"/><rect x="3520.4" y="336.9" width="22.6" height="5" fill="#4a8af4"/><rect x="3545.6" y="336.9" width="120.1" height="5" fill="#3bb75a"/><rect x="3668.3" y="336.9" width="21.9" height="5" fill="#4a8af4"/><rect x="1144.7" y="344.5" width="12.5" height="5" fill="#868686"/><rect x="1159.6" y="344.5" width="22.8" height="5" fill="#5fcff5"/><rect x="1186.6" y="344.5" width="89.5" height="5" fill="#3bb75a"/><rect x="1278.0" y="344.5" width="363.0" height="5" fill="#4a8af4"/><rect x="1644.6" y="344.5" width="140.7" height="5" fill="#3bb75a"/><rect x="1788.0" y="344.5" width="22.0" height="5" fill="#4a8af4"/><rect x="1812.6" y="344.5" width="194.4" height="5" fill="#3bb75a"/><rect x="2009.8" y="344.5" width="22.0" height="5" fill="#4a8af4"/><rect x="3052.4" y="344.5" width="79.9" height="5" fill="#3bb75a"/><rect x="3134.9" y="344.5" width="116.2" height="5" fill="#4a8af4"/><rect x="3257.6" y="344.5" width="257.6" height="5" fill="#3bb75a"/><rect x="3517.8" y="344.5" width="22.2" height="5" fill="#4a8af4"/><rect x="3543.0" y="344.5" width="119.7" height="5" fill="#3bb75a"/><rect x="3665.4" y="344.5" width="21.9" height="5" fill="#4a8af4"/><rect x="1144.2" y="351.9" width="41.0" height="5" fill="#868686"/><rect x="1188.0" y="351.9" width="10.2" height="5" fill="#5fcff5"/><rect x="1201.0" y="351.9" width="176.1" height="5" fill="#3bb75a"/><rect x="1379.0" y="351.9" width="233.0" height="5" fill="#4a8af4"/><rect x="1615.8" y="351.9" width="113.7" height="5" fill="#3bb75a"/><rect x="1731.9" y="351.9" width="54.5" height="5" fill="#4a8af4"/><rect x="1793.5" y="351.9" width="217.9" height="5" fill="#3bb75a"/><rect x="2013.6" y="351.9" width="34.8" height="5" fill="#4a8af4"/><rect x="3051.4" y="351.9" width="69.4" height="5" fill="#3bb75a"/><rect x="3123.4" y="351.9" width="127.7" height="5" fill="#4a8af4"/><rect x="3257.6" y="351.9" width="151.2" height="5" fill="#3bb75a"/><rect x="3411.4" y="351.9" width="67.1" height="5" fill="#4a8af4"/><rect x="3486.0" y="351.9" width="109.7" height="5" fill="#3bb75a"/><rect x="3598.3" y="351.9" width="49.4" height="5" fill="#4a8af4"/><rect x="3651.0" y="351.9" width="90.0" height="5" fill="#3bb75a"/><rect x="3743.6" y="351.9" width="22.2" height="5" fill="#4a8af4"/><rect x="1145.3" y="359.2" width="47.9" height="5" fill="#868686"/><rect x="1196.3" y="359.2" width="22.0" height="5" fill="#5fcff5"/><rect x="1220.7" y="359.2" width="16.6" height="5" fill="#f2b01e"/><rect x="1240.1" y="359.2" width="262.4" height="5" fill="#3bb75a"/><rect x="1504.0" y="359.2" width="135.5" height="5" fill="#4a8af4"/><rect x="1644.6" y="359.2" width="141.4" height="5" fill="#3bb75a"/><rect x="1789.0" y="359.2" width="22.2" height="5" fill="#4a8af4"/><rect x="1814.0" y="359.2" width="108.6" height="5" fill="#3bb75a"/><rect x="1924.7" y="359.2" width="22.9" height="5" fill="#4a8af4"/><rect x="3054.1" y="359.2" width="102.7" height="5" fill="#3bb75a"/><rect x="3159.4" y="359.2" width="91.0" height="5" fill="#4a8af4"/><rect x="3257.6" y="359.2" width="259.2" height="5" fill="#3bb75a"/><rect x="3519.4" y="359.2" width="22.3" height="5" fill="#4a8af4"/><rect x="3544.9" y="359.2" width="119.1" height="5" fill="#3bb75a"/><rect x="3666.7" y="359.2" width="22.2" height="5" fill="#4a8af4"/><rect x="1145.3" y="366.8" width="51.6" height="5" fill="#868686"/><rect x="1199.3" y="366.8" width="22.4" height="5" fill="#5fcff5"/><rect x="1223.9" y="366.8" width="14.9" height="5" fill="#f2b01e"/><rect x="1241.6" y="366.8" width="263.1" height="5" fill="#3bb75a"/><rect x="1506.8" y="366.8" width="221.5" height="5" fill="#4a8af4"/><rect x="1736.4" y="366.8" width="175.3" height="5" fill="#3bb75a"/><rect x="1913.9" y="366.8" width="22.2" height="5" fill="#4a8af4"/><rect x="1938.3" y="366.8" width="172.3" height="5" fill="#3bb75a"/><rect x="2112.8" y="366.8" width="22.5" height="5" fill="#4a8af4"/><rect x="3016.4" y="366.8" width="65.5" height="5" fill="#3bb75a"/><rect x="3084.2" y="366.8" width="22.2" height="5" fill="#4a8af4"/><rect x="3109.4" y="366.8" width="64.1" height="5" fill="#3bb75a"/><rect x="3175.8" y="366.8" width="76.9" height="5" fill="#4a8af4"/><rect x="3257.0" y="366.8" width="129.9" height="5" fill="#3bb75a"/><rect x="3389.5" y="366.8" width="92.3" height="5" fill="#4a8af4"/><rect x="3485.0" y="366.8" width="86.8" height="5" fill="#3bb75a"/><rect x="3574.4" y="366.8" width="70.0" height="5" fill="#4a8af4"/><rect x="3651.0" y="366.8" width="117.1" height="5" fill="#3bb75a"/><rect x="3770.4" y="366.8" width="22.6" height="5" fill="#4a8af4"/><rect x="1145.3" y="374.1" width="61.7" height="5" fill="#868686"/><rect x="1211.8" y="374.1" width="22.4" height="5" fill="#5fcff5"/><rect x="1236.6" y="374.1" width="3.2" height="5" fill="#f2b01e"/><rect x="1242.5" y="374.1" width="261.8" height="5" fill="#3bb75a"/><rect x="1506.2" y="374.1" width="224.8" height="5" fill="#4a8af4"/><rect x="1735.9" y="374.1" width="173.9" height="5" fill="#3bb75a"/><rect x="1912.0" y="374.1" width="22.2" height="5" fill="#4a8af4"/><rect x="1936.4" y="374.1" width="175.8" height="5" fill="#3bb75a"/><rect x="2114.4" y="374.1" width="22.3" height="5" fill="#4a8af4"/><rect x="3006.3" y="374.1" width="99.8" height="5" fill="#3bb75a"/><rect x="3108.4" y="374.1" width="22.2" height="5" fill="#4a8af4"/><rect x="3133.3" y="374.1" width="111.2" height="5" fill="#3bb75a"/><rect x="3247.8" y="374.1" width="21.9" height="5" fill="#4a8af4"/><rect x="3272.3" y="374.1" width="37.7" height="5" fill="#3bb75a"/><rect x="3312.3" y="374.1" width="22.2" height="5" fill="#4a8af4"/><rect x="3337.1" y="374.1" width="110.3" height="5" fill="#3bb75a"/><rect x="3449.7" y="374.1" width="31.1" height="5" fill="#4a8af4"/><rect x="3485.7" y="374.1" width="109.0" height="5" fill="#3bb75a"/><rect x="3597.0" y="374.1" width="49.0" height="5" fill="#4a8af4"/><rect x="3651.0" y="374.1" width="117.1" height="5" fill="#3bb75a"/><rect x="3771.4" y="374.1" width="21.6" height="5" fill="#4a8af4"/><rect x="1206.800" y="316" width="2.600" height="149" fill="#a8c7fa"/><rect x="2716.700" y="316" width="2.600" height="149" fill="#e38f8f"/><rect x="957" y="265" width="4.500" height="200" fill="#1a7db8"/><path d="M957.500 266h5.500a5.500 5.500 0 0 1 5.500 5.500v35a5.500 5.500 0 0 1-5.500 5.500h-5.500z" fill="#01588f" stroke="#1a80bd" stroke-width="1.200"/><rect x="958.900" y="281.200" width="2.100" height="16.700" fill="#9fd4ff"/></svg><div class="a" style="left:958px;top:465px;width:2835px;height:67px;background:#292a2d;border-top:2px solid #595959;border-bottom:2.400px solid #5a5a5a"></div><div class="a" style="left:2559px;top:467px;width:317px;height:63px;background:#3d3d3d"></div><div class="t dt" style="left:969px;top:482.200px">名称</div><div class="t dt" style="left:1690.5px;top:482.200px">状态</div><div class="t dt" style="left:1891.5px;top:482.200px">类型</div><div class="t dt" style="left:2108.5px;top:482.200px">启动器</div><div class="t dt" style="left:2569.5px;top:482.200px">大小</div><div class="t dt" style="left:2886.5px;top:482.200px">时间</div><svg class="a" style="left:2838px;top:491.800px" width="19.500" height="13.500" viewBox="0 0 20 14"><path d="M0 13.500h20L10 0z" fill="#c7c7c7"/></svg><div class="a" id="tbl" style="left:0;top:534.400px;width:3793px;height:1125.600px;overflow:hidden"><div class="row" style="top:-18.9px;background:#28292c"><svg class="ic" viewBox="0 0 27.400 27" fill="none" stroke="#f08c57"><rect x="1.550" y="1.550" width="24.300" height="23.900" rx="3.200" stroke-width="3.100"/><path d="M10.900 9.300L6.700 13.500l4.200 4.200M16.500 9.300l4.200 4.200-4.200 4.200" stroke-width="3.100" stroke-linejoin="miter"/></svg><div class="t la" style="left:57px">page-56c96b6512be3e46.js</div><div class="t la" style="left:732.500px">200</div><div class="t la" style="left:932.500px">script</div><div class="a" style="left:1140px;top:0;width:461px;height:52px;overflow:hidden"><div class="t la" style="left:10.500px"><u>webpack-c411b4b6e8594303.js:</u></div></div><div class="t la" style="right:933px">4.2 kB</div><div class="t la" style="right:0">11 ms</div></div><div class="row" style="top:33.1px;background:#1f1f1f"><svg class="ic" viewBox="0 0 27.400 27" fill="none" stroke="#f08c57"><rect x="1.550" y="1.550" width="24.300" height="23.900" rx="3.200" stroke-width="3.100"/><path d="M10.900 9.300L6.700 13.500l4.200 4.200M16.500 9.300l4.200 4.200-4.200 4.200" stroke-width="3.100" stroke-linejoin="miter"/></svg><div class="t la" style="left:57px">page-99053d5d61644e54.js</div><div class="t la" style="left:732.500px">200</div><div class="t la" style="left:932.500px">script</div><div class="a" style="left:1140px;top:0;width:461px;height:52px;overflow:hidden"><div class="t la" style="left:10.500px"><u>webpack-c411b4b6e8594303.js:</u></div></div><div class="t la" style="right:933px">4.5 kB</div><div class="t la" style="right:0">17 ms</div></div><div class="row" style="top:85.1px;background:#28292c"><svg class="ic" viewBox="0 0 27.400 27" fill="none" stroke="#f08c57"><rect x="1.550" y="1.550" width="24.300" height="23.900" rx="3.200" stroke-width="3.100"/><path d="M10.900 9.300L6.700 13.500l4.200 4.200M16.500 9.300l4.200 4.200-4.200 4.200" stroke-width="3.100" stroke-linejoin="miter"/></svg><div class="t la" style="left:57px">page-8c5c2643583be9d1.js</div><div class="t la" style="left:732.500px">200</div><div class="t la" style="left:932.500px">script</div><div class="a" style="left:1140px;top:0;width:461px;height:52px;overflow:hidden"><div class="t la" style="left:10.500px"><u>webpack-c411b4b6e8594303.js:</u></div></div><div class="t la" style="right:933px">4.7 kB</div><div class="t la" style="right:0">7 ms</div></div><div class="row" style="top:137.1px;background:#1f1f1f"><svg class="ic" viewBox="0 0 27.400 27" fill="none" stroke="#f08c57"><rect x="1.550" y="1.550" width="24.300" height="23.900" rx="3.200" stroke-width="3.100"/><path d="M10.900 9.300L6.700 13.500l4.200 4.200M16.500 9.300l4.200 4.200-4.200 4.200" stroke-width="3.100" stroke-linejoin="miter"/></svg><div class="t la" style="left:57px">page-6b3ce35e2afca80a.js</div><div class="t la" style="left:732.500px">200</div><div class="t la" style="left:932.500px">script</div><div class="a" style="left:1140px;top:0;width:461px;height:52px;overflow:hidden"><div class="t la" style="left:10.500px"><u>webpack-c411b4b6e8594303.js:</u></div></div><div class="t la" style="right:933px">4.7 kB</div><div class="t la" style="right:0">31 ms</div></div><div class="row" style="top:189.1px;background:#28292c"><svg class="ic" viewBox="0 0 27.400 27" fill="none" stroke="#f08c57"><rect x="1.550" y="1.550" width="24.300" height="23.900" rx="3.200" stroke-width="3.100"/><path d="M10.900 9.300L6.700 13.500l4.200 4.200M16.500 9.300l4.200 4.200-4.200 4.200" stroke-width="3.100" stroke-linejoin="miter"/></svg><div class="t la" style="left:57px">page-d42093ea17f446fe.js</div><div class="t la" style="left:732.500px">200</div><div class="t la" style="left:932.500px">script</div><div class="a" style="left:1140px;top:0;width:461px;height:52px;overflow:hidden"><div class="t la" style="left:10.500px"><u>webpack-c411b4b6e8594303.js:</u></div></div><div class="t la" style="right:933px">4.9 kB</div><div class="t la" style="right:0">14 ms</div></div><div class="row" style="top:241.1px;background:#1f1f1f"><svg class="ic" viewBox="0 0 27.400 27" fill="none" stroke="#f08c57"><rect x="1.550" y="1.550" width="24.300" height="23.900" rx="3.200" stroke-width="3.100"/><path d="M10.900 9.300L6.700 13.500l4.200 4.200M16.500 9.300l4.200 4.200-4.200 4.200" stroke-width="3.100" stroke-linejoin="miter"/></svg><div class="t la" style="left:57px">3649-bb6ab61b01016d11.js</div><div class="t la" style="left:732.500px">200</div><div class="t la" style="left:932.500px">script</div><div class="a" style="left:1140px;top:0;width:461px;height:52px;overflow:hidden"><div class="t la" style="left:10.500px"><u>me:1</u></div></div><div class="t la" style="right:933px">5.1 kB</div><div class="t la" style="right:0">23 ms</div></div><div class="row" style="top:293.1px;background:#28292c"><svg class="ic" viewBox="0 0 27.400 27" fill="none" stroke="#f08c57"><rect x="1.550" y="1.550" width="24.300" height="23.900" rx="3.200" stroke-width="3.100"/><path d="M10.900 9.300L6.700 13.500l4.200 4.200M16.500 9.300l4.200 4.200-4.200 4.200" stroke-width="3.100" stroke-linejoin="miter"/></svg><div class="t la" style="left:57px">page-4fd348eb09db3afb.js</div><div class="t la" style="left:732.500px">200</div><div class="t la" style="left:932.500px">script</div><div class="a" style="left:1140px;top:0;width:461px;height:52px;overflow:hidden"><div class="t la" style="left:10.500px"><u>webpack-c411b4b6e8594303.js:</u></div></div><div class="t la" style="right:933px">5.5 kB</div><div class="t la" style="right:0">19 ms</div></div><div class="row" style="top:345.1px;background:#1f1f1f"><svg class="ic" viewBox="0 0 27.400 27" fill="none" stroke="#f08c57"><rect x="1.550" y="1.550" width="24.300" height="23.900" rx="3.200" stroke-width="3.100"/><path d="M10.900 9.300L6.700 13.500l4.200 4.200M16.500 9.300l4.200 4.200-4.200 4.200" stroke-width="3.100" stroke-linejoin="miter"/></svg><div class="t la" style="left:57px">page-6f78b19b061d0c0b.js</div><div class="t la" style="left:732.500px">200</div><div class="t la" style="left:932.500px">script</div><div class="a" style="left:1140px;top:0;width:461px;height:52px;overflow:hidden"><div class="t la" style="left:10.500px"><u>webpack-c411b4b6e8594303.js:</u></div></div><div class="t la" style="right:933px">5.6 kB</div><div class="t la" style="right:0">26 ms</div></div><div class="row" style="top:397.1px;background:#3d3d3d"><svg class="ic" viewBox="0 0 27.400 27" fill="none" stroke="#f08c57"><rect x="1.550" y="1.550" width="24.300" height="23.900" rx="3.200" stroke-width="3.100"/><path d="M10.900 9.300L6.700 13.500l4.200 4.200M16.500 9.300l4.200 4.200-4.200 4.200" stroke-width="3.100" stroke-linejoin="miter"/></svg><div class="t la" style="left:57px">6425-418c7556ffb147f1.js</div><div class="t la" style="left:732.500px">200</div><div class="t la" style="left:932.500px">script</div><div class="a" style="left:1140px;top:0;width:461px;height:52px;overflow:hidden"><div class="t la" style="left:10.500px"><u>webpack-c411b4b6e8594303.js:</u></div></div><div class="t la" style="right:933px">5.7 kB</div><div class="t la" style="right:0">19 ms</div></div><div class="row" style="top:449.1px;background:#1f1f1f"><svg class="ic" viewBox="0 0 27.400 27" fill="none" stroke="#f08c57"><rect x="1.550" y="1.550" width="24.300" height="23.900" rx="3.200" stroke-width="3.100"/><path d="M10.900 9.300L6.700 13.500l4.200 4.200M16.500 9.300l4.200 4.200-4.200 4.200" stroke-width="3.100" stroke-linejoin="miter"/></svg><div class="t la" style="left:57px">856-842c65f2898da160.js</div><div class="t la" style="left:732.500px">200</div><div class="t la" style="left:932.500px">script</div><div class="a" style="left:1140px;top:0;width:461px;height:52px;overflow:hidden"><div class="t la" style="left:10.500px"><u>me:1</u></div></div><div class="t la" style="right:933px">6.3 kB</div><div class="t la" style="right:0">30 ms</div></div><div class="row" style="top:501.1px;background:#28292c"><svg class="ic" viewBox="0 0 27.400 27" fill="none" stroke="#f08c57"><rect x="1.550" y="1.550" width="24.300" height="23.900" rx="3.200" stroke-width="3.100"/><path d="M10.900 9.300L6.700 13.500l4.200 4.200M16.500 9.300l4.200 4.200-4.200 4.200" stroke-width="3.100" stroke-linejoin="miter"/></svg><div class="t la" style="left:57px">1463-6e89c0dfbb6e137d.js</div><div class="t la" style="left:732.500px">200</div><div class="t la" style="left:932.500px">script</div><div class="a" style="left:1140px;top:0;width:461px;height:52px;overflow:hidden"><div class="t la" style="left:10.500px"><u>webpack-c411b4b6e8594303.js:</u></div></div><div class="t la" style="right:933px">6.5 kB</div><div class="t la" style="right:0">19 ms</div></div><div class="row" style="top:553.1px;background:#1f1f1f"><svg class="ic" viewBox="0 0 27.400 27" fill="none" stroke="#f08c57"><rect x="1.550" y="1.550" width="24.300" height="23.900" rx="3.200" stroke-width="3.100"/><path d="M10.900 9.300L6.700 13.500l4.200 4.200M16.500 9.300l4.200 4.200-4.200 4.200" stroke-width="3.100" stroke-linejoin="miter"/></svg><div class="t la" style="left:57px">page-c39737006171991a.js</div><div class="t la" style="left:732.500px">200</div><div class="t la" style="left:932.500px">script</div><div class="a" style="left:1140px;top:0;width:461px;height:52px;overflow:hidden"><div class="t la" style="left:10.500px"><u>me:1</u></div></div><div class="t la" style="right:933px">6.5 kB</div><div class="t la" style="right:0">23 ms</div></div><div class="row" style="top:605.1px;background:#28292c"><svg class="ic" viewBox="0 0 27.400 27" fill="none" stroke="#f08c57"><rect x="1.550" y="1.550" width="24.300" height="23.900" rx="3.200" stroke-width="3.100"/><path d="M10.900 9.300L6.700 13.500l4.200 4.200M16.500 9.300l4.200 4.200-4.200 4.200" stroke-width="3.100" stroke-linejoin="miter"/></svg><div class="t la" style="left:57px">3606-9b5bdef63f3c9e51.js</div><div class="t la" style="left:732.500px">200</div><div class="t la" style="left:932.500px">script</div><div class="a" style="left:1140px;top:0;width:461px;height:52px;overflow:hidden"><div class="t la" style="left:10.500px"><u>webpack-c411b4b6e8594303.js:</u></div></div><div class="t la" style="right:933px">7.0 kB</div><div class="t la" style="right:0">14 ms</div></div><div class="row" style="top:657.1px;background:#1f1f1f"><svg class="ic" viewBox="0 0 27.400 27" fill="none" stroke="#f08c57"><rect x="1.550" y="1.550" width="24.300" height="23.900" rx="3.200" stroke-width="3.100"/><path d="M10.900 9.300L6.700 13.500l4.200 4.200M16.500 9.300l4.200 4.200-4.200 4.200" stroke-width="3.100" stroke-linejoin="miter"/></svg><div class="t la" style="left:57px">6643-7ea2966703b86d40.js</div><div class="t la" style="left:732.500px">200</div><div class="t la" style="left:932.500px">script</div><div class="a" style="left:1140px;top:0;width:461px;height:52px;overflow:hidden"><div class="t la" style="left:10.500px"><u>webpack-c411b4b6e8594303.js:</u></div></div><div class="t la" style="right:933px">10.7 kB</div><div class="t la" style="right:0">11 ms</div></div><div class="row" style="top:709.1px;background:#28292c"><svg class="ic" viewBox="0 0 27.400 27" fill="none" stroke="#f08c57"><rect x="1.550" y="1.550" width="24.300" height="23.900" rx="3.200" stroke-width="3.100"/><path d="M10.900 9.300L6.700 13.500l4.200 4.200M16.500 9.300l4.200 4.200-4.200 4.200" stroke-width="3.100" stroke-linejoin="miter"/></svg><div class="t la" style="left:57px">4664-c0dca2f20760634b.js</div><div class="t la" style="left:732.500px">200</div><div class="t la" style="left:932.500px">script</div><div class="a" style="left:1140px;top:0;width:461px;height:52px;overflow:hidden"><div class="t la" style="left:10.500px"><u>me:1</u></div></div><div class="t la" style="right:933px">12.6 kB</div><div class="t la" style="right:0">17 ms</div></div><div class="row" style="top:761.1px;background:#1f1f1f"><svg class="ic" viewBox="0 0 27.400 27" fill="none" stroke="#f08c57"><rect x="1.550" y="1.550" width="24.300" height="23.900" rx="3.200" stroke-width="3.100"/><path d="M10.900 9.300L6.700 13.500l4.200 4.200M16.500 9.300l4.200 4.200-4.200 4.200" stroke-width="3.100" stroke-linejoin="miter"/></svg><div class="t la" style="left:57px">624-5825d6504ff24200.js</div><div class="t la" style="left:732.500px">200</div><div class="t la" style="left:932.500px">script</div><div class="a" style="left:1140px;top:0;width:461px;height:52px;overflow:hidden"><div class="t la" style="left:10.500px"><u>me:1</u></div></div><div class="t la" style="right:933px">13.0 kB</div><div class="t la" style="right:0">51 ms</div></div><div class="row" style="top:813.1px;background:#28292c"><svg class="ic" viewBox="0 0 27.400 27" fill="none" stroke="#f08c57"><rect x="1.550" y="1.550" width="24.300" height="23.900" rx="3.200" stroke-width="3.100"/><path d="M10.900 9.300L6.700 13.500l4.200 4.200M16.500 9.300l4.200 4.200-4.200 4.200" stroke-width="3.100" stroke-linejoin="miter"/></svg><div class="t la" style="left:57px">5312-3093a85e58a0e4e1.js</div><div class="t la" style="left:732.500px">200</div><div class="t la" style="left:932.500px">script</div><div class="a" style="left:1140px;top:0;width:461px;height:52px;overflow:hidden"><div class="t la" style="left:10.500px"><u>me:1</u></div></div><div class="t la" style="right:933px">17.9 kB</div><div class="t la" style="right:0">20 ms</div></div><div class="row" style="top:865.1px;background:#1f1f1f"><svg class="ic" viewBox="0 0 27.400 27" fill="none" stroke="#f08c57"><rect x="1.550" y="1.550" width="24.300" height="23.900" rx="3.200" stroke-width="3.100"/><path d="M10.900 9.300L6.700 13.500l4.200 4.200M16.500 9.300l4.200 4.200-4.200 4.200" stroke-width="3.100" stroke-linejoin="miter"/></svg><div class="t la" style="left:57px">9718-a5a1000dfd7498fe.js</div><div class="t la" style="left:732.500px">200</div><div class="t la" style="left:932.500px">script</div><div class="a" style="left:1140px;top:0;width:461px;height:52px;overflow:hidden"><div class="t la" style="left:10.500px"><u>me:1</u></div></div><div class="t la" style="right:933px">22.9 kB</div><div class="t la" style="right:0">61 ms</div></div><div class="row" style="top:917.1px;background:#28292c"><svg class="ic" viewBox="0 0 27.400 27" fill="none" stroke="#f08c57"><rect x="1.550" y="1.550" width="24.300" height="23.900" rx="3.200" stroke-width="3.100"/><path d="M10.900 9.300L6.700 13.500l4.200 4.200M16.500 9.300l4.200 4.200-4.200 4.200" stroke-width="3.100" stroke-linejoin="miter"/></svg><div class="t la" style="left:57px">3420-f7768662106c288a.js</div><div class="t la" style="left:732.500px">200</div><div class="t la" style="left:932.500px">script</div><div class="a" style="left:1140px;top:0;width:461px;height:52px;overflow:hidden"><div class="t la" style="left:10.500px"><u>me:1</u></div></div><div class="t la" style="right:933px">30.8 kB</div><div class="t la" style="right:0">60 ms</div></div><div class="row" style="top:969.1px;background:#1f1f1f"><svg class="ic" viewBox="0 0 27.400 27" fill="none" stroke="#f08c57"><rect x="1.550" y="1.550" width="24.300" height="23.900" rx="3.200" stroke-width="3.100"/><path d="M10.900 9.300L6.700 13.500l4.200 4.200M16.500 9.300l4.200 4.200-4.200 4.200" stroke-width="3.100" stroke-linejoin="miter"/></svg><div class="t la" style="left:57px">7766-b56f4115be5b7022.js</div><div class="t la" style="left:732.500px">200</div><div class="t la" style="left:932.500px">script</div><div class="a" style="left:1140px;top:0;width:461px;height:52px;overflow:hidden"><div class="t la" style="left:10.500px"><u>me:1</u></div></div><div class="t la" style="right:933px">44.8 kB</div><div class="t la" style="right:0">49 ms</div></div><div class="row" style="top:1021.1px;background:#28292c"><svg class="ic" viewBox="0 0 27.400 27" fill="none" stroke="#f08c57"><rect x="1.550" y="1.550" width="24.300" height="23.900" rx="3.200" stroke-width="3.100"/><path d="M10.900 9.300L6.700 13.500l4.200 4.200M16.500 9.300l4.200 4.200-4.200 4.200" stroke-width="3.100" stroke-linejoin="miter"/></svg><div class="t la" style="left:57px">b54b8a9f-0f4d518a0ee0a188.js</div><div class="t la" style="left:732.500px">200</div><div class="t la" style="left:932.500px">script</div><div class="a" style="left:1140px;top:0;width:461px;height:52px;overflow:hidden"><div class="t la" style="left:10.500px"><u>me:1</u></div></div><div class="t la" style="right:933px">54.7 kB</div><div class="t la" style="right:0">55 ms</div></div><div class="row" style="top:1073.1px;background:#1f1f1f"><svg class="ic" viewBox="0 0 27.400 27" fill="none" stroke="#f08c57"><rect x="1.550" y="1.550" width="24.300" height="23.900" rx="3.200" stroke-width="3.100"/><path d="M10.900 9.300L6.700 13.500l4.200 4.200M16.500 9.300l4.200 4.200-4.200 4.200" stroke-width="3.100" stroke-linejoin="miter"/></svg><div class="t la" style="left:57px">7056-a26231bc9867b2cc.js</div><div class="t la" style="left:732.500px">200</div><div class="t la" style="left:932.500px">script</div><div class="a" style="left:1140px;top:0;width:461px;height:52px;overflow:hidden"><div class="t la" style="left:10.500px"><u>me:1</u></div></div><div class="t la" style="right:933px">86.1 kB</div><div class="t la" style="right:0">54 ms</div></div></div><div class="a" style="left:1677.6px;top:467px;width:2px;height:1193px;background:#555"></div><div class="a" style="left:1878.9px;top:467px;width:2px;height:1193px;background:#555"></div><div class="a" style="left:2096.9px;top:467px;width:2px;height:1193px;background:#555"></div><div class="a" style="left:2558.0px;top:467px;width:2px;height:1193px;background:#555"></div><div class="a" style="left:2874.9px;top:467px;width:2px;height:1193px;background:#555"></div><div class="a" style="left:957px;top:1659px;width:2836px;height:67px;background:#282828;border-top:2.200px solid #4d4d4d"></div><div class="t" style="left:981px;top:1677px;font-size:30px;letter-spacing:.15px;color:#c7c7c7;margin-top:1.5px">第 33 项请求，共 46 项</div><div class="t" style="left:1343px;top:1677px;font-size:30px;letter-spacing:.15px;color:#c7c7c7;margin-top:1.5px">已传输 393 kB，共 417 kB</div><div class="t" style="left:1746.500px;top:1677px;font-size:30px;letter-spacing:.15px;color:#c7c7c7;margin-top:1.5px">所选资源大小为 1,249 kB，共 1,309 kB</div><div class="t" style="left:2319px;top:1677px;font-size:30px;letter-spacing:.15px;color:#c7c7c7;margin-top:1.5px">完成用时：322 ms</div><div class="t" style="left:2617.500px;top:1677px;font-size:30px;letter-spacing:.15px;color:#c7c7c7;margin-top:1.5px;color:#a8c7fa;font-size:31px;letter-spacing:.35px">DOMContentLoaded：28 ms</div><div class="t" style="left:3074px;top:1677px;font-size:30px;letter-spacing:.15px;color:#c7c7c7;margin-top:1.5px;color:#f2b8b5">加载时间：201 ms</div><div class="vd" style="left:1723.5px;top:1674px;height:38px;width:2px"></div><div class="vd" style="left:2295px;top:1674px;height:38px;width:2px"></div><div class="vd" style="left:3049.5px;top:1674px;height:38px;width:2px"></div><div class="a" style="left:1319px;top:1664px;width:412.6px;height:49.4px;border:2.600px solid #e0262d"></div><div class="a" style="left:2300.7px;top:1662.7px;width:293.7px;height:59.7px;border:2.600px solid #e0262d"></div><div class="a" style="left:3056.6px;top:1647.8px;width:323.6px;height:71.2px;border:2.600px solid #e0262d"></div><div class="t" style="left:3490px;top:1664px;font-size:24.500px;color:#d6d6d6">掘金技术社区 @ 云智乔</div><div class="a" style="left:0;top:1725.500px;width:3793px;height:6px;background:#d3e3ec;border-top:1.500px solid #a7b3b9"></div></body></html>
